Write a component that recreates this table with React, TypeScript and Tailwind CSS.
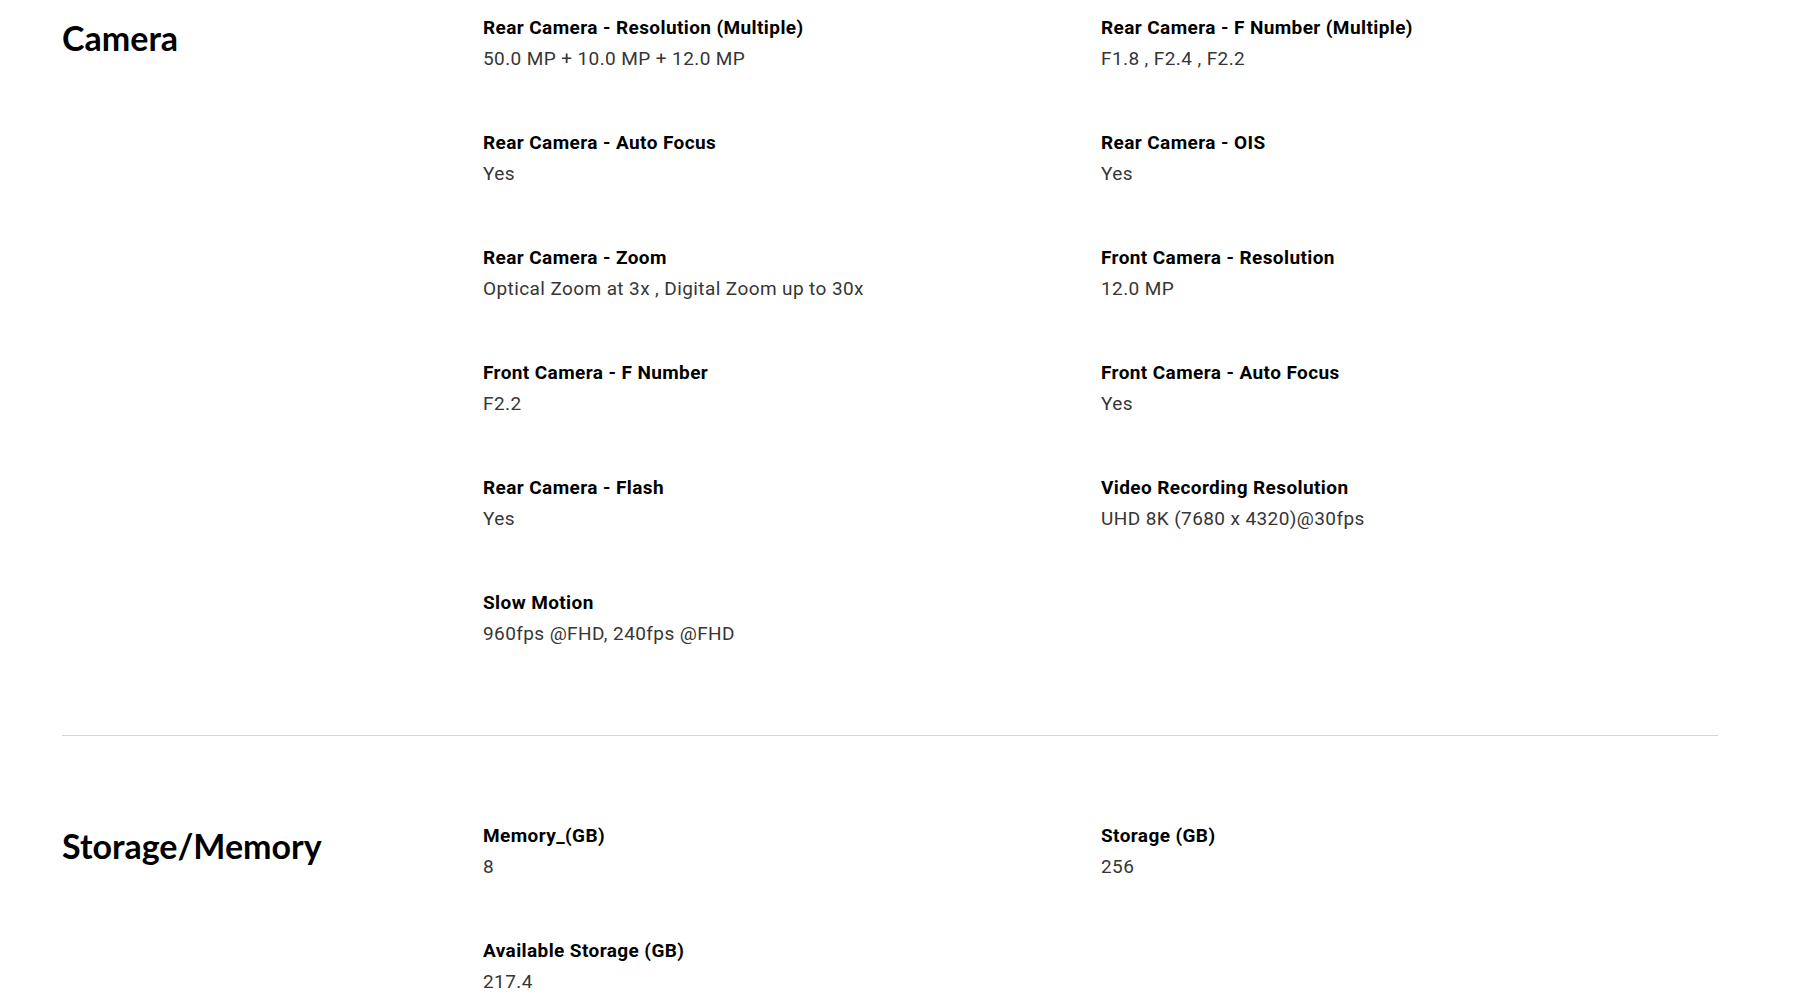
import React from 'react';

type Spec = { label: string; value: string };

// Spec sections as shown on the page
const sections: { title: string; specs: Spec[] }[] = [
  {
    title: 'Camera',
    specs: [
      { label: 'Rear Camera - Resolution (Multiple)', value: '50.0 MP + 10.0 MP + 12.0 MP' },
      { label: 'Rear Camera - F Number (Multiple)', value: 'F1.8 , F2.4 , F2.2' },
      { label: 'Rear Camera - Auto Focus', value: 'Yes' },
      { label: 'Rear Camera - OIS', value: 'Yes' },
      { label: 'Rear Camera - Zoom', value: 'Optical Zoom at 3x , Digital Zoom up to 30x' },
      { label: 'Front Camera - Resolution', value: '12.0 MP' },
      { label: 'Front Camera - F Number', value: 'F2.2' },
      { label: 'Front Camera - Auto Focus', value: 'Yes' },
      { label: 'Rear Camera - Flash', value: 'Yes' },
      { label: 'Video Recording Resolution', value: 'UHD 8K (7680 x 4320)@30fps' },
      { label: 'Slow Motion', value: '960fps @FHD, 240fps @FHD' },
    ],
  },
  {
    title: 'Storage/Memory',
    specs: [
      { label: 'Memory_(GB)', value: '8' },
      { label: 'Storage (GB)', value: '256' },
      { label: 'Available Storage (GB)', value: '217.4' },
    ],
  },
];

const SpecItem = ({ spec }: { spec: Spec }) => (
  <div className="flex flex-col">
    <p className="text-[19px] leading-[24px] font-bold text-black tracking-[0.4px]">{spec.label}</p>
    <p className="mt-[7px] text-[19px] leading-[24px] text-[#363636] tracking-[0.4px]">{spec.value}</p>
  </div>
);

export default function App() {
  return (
    <div className="min-h-screen bg-white font-['Roboto',sans-serif]">
      <div className="ml-[62px] w-[1656px]">
        {sections.map((section, i) => (
          <section
            key={section.title}
            className={
              i === 0
                ? 'flex pt-[16px] pb-[89px] border-b border-[#d6d6d6]'
                : 'flex pt-[88px] pb-[40px]'
            }
          >
            <h2 className="w-[421px] shrink-0 pt-[2px] text-[34px] leading-[40px] font-bold text-black font-['Lato',sans-serif]">
              {section.title}
            </h2>
            <div className="grid grid-cols-[618px_618px] gap-y-[60px]">
              {section.specs.map((spec) => (
                <SpecItem key={spec.label} spec={spec} />
              ))}
            </div>
          </section>
        ))}
      </div>
    </div>
  );
}
